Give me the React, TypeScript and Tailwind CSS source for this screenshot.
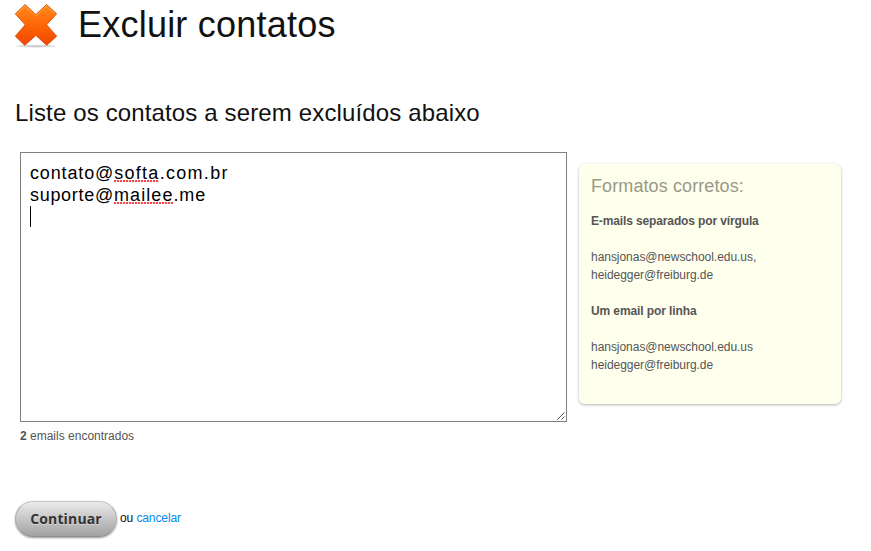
const MISSPELLED =
  "relative after:absolute after:left-0 after:right-px after:top-[17px] after:h-[2px] after:bg-[repeating-linear-gradient(90deg,#f5484c_0px,#f5484c_2px,#ffe4e4_2px,#ffe4e4_3px)] after:content-['']";

function DeleteIcon() {
  return (
    <svg width="46" height="50" viewBox="0 0 46 50" className="block shrink-0" aria-hidden="true">
      <defs>
        <linearGradient id="cross" x1="0" y1="0" x2="0" y2="1">
          <stop offset="0" stopColor="#ff8a1c" />
          <stop offset="0.45" stopColor="#ff6a08" />
          <stop offset="1" stopColor="#f04400" />
        </linearGradient>
        <radialGradient id="floor">
          <stop offset="0" stopColor="#999" stopOpacity="0.6" />
          <stop offset="0.8" stopColor="#aaa" stopOpacity="0.35" />
          <stop offset="1" stopColor="#aaa" stopOpacity="0" />
        </radialGradient>
      </defs>
      <ellipse cx="23" cy="46.2" rx="22" ry="1.6" fill="url(#floor)" />
      <path
        d="M12 4.6 L22.8 14.6 L33.6 4.6 L43.6 13.8 L33.6 24.8 L43.6 36.2 L33.8 45.3 L22.8 35.4 L11.8 45.3 L2.4 36.2 L12.2 24.8 L2.4 13.8 Z"
        fill="url(#cross)"
        stroke="#e05010"
        strokeWidth="1"
        strokeLinejoin="round"
      />
      <path
        d="M3.8 13.8 L12 6 L22.8 16.1 L33.6 6 L42.2 13.8"
        fill="none"
        stroke="#ffb04a"
        strokeWidth="0.9"
      />
    </svg>
  );
}

function FormatsCard() {
  return (
    <aside className="mt-3 h-60 w-[262px] rounded-md bg-[#ffffee] px-3 pt-[13px] text-xs leading-[18px] tracking-[-0.04px] text-[#555] shadow-[0_1px_3px_rgba(0,0,0,0.3)]">
      <h3 className="text-lg leading-[18px] tracking-[0.1px] text-[#999988]">Formatos corretos:</h3>
      <p className="mt-[17px] font-bold tracking-[-0.13px]">E-mails separados por vírgula</p>
      <p className="mt-[18px]">
        hansjonas@newschool.edu.us,
        <br />
        heidegger@freiburg.de
      </p>
      <p className="mt-[18px] font-bold tracking-[-0.1px]">Um email por linha</p>
      <p className="mt-[18px]">
        hansjonas@newschool.edu.us
        <br />
        heidegger@freiburg.de
      </p>
    </aside>
  );
}

export default function App() {
  return (
    <main className="h-[551px] w-[871px] overflow-hidden bg-white font-['Liberation_Sans',Arial,sans-serif] text-[#111]">
      <header className="flex h-[50px] pl-[13px]">
        <DeleteIcon />
        <h1 className="ml-[19px] text-[36px] leading-[50px] tracking-[0.22px] whitespace-nowrap">Excluir contatos</h1>
      </header>
      <h2 className="mt-[47px] pl-[15px] text-2xl leading-8 tracking-[0.14px] whitespace-nowrap">
        Liste os contatos a serem excluídos abaixo
      </h2>
      <section className="mt-[23px] flex gap-3 pl-5">
        <div className="relative h-[270px] w-[547px] border border-[#808080] bg-white px-[9px] py-[9px] text-lg leading-[22px] tracking-[1.3px] text-black">
          <p>
            <span className="tracking-[0.85px]">contato@</span>
            <span className={MISSPELLED}>softa</span>.com.br
          </p>
          <p>
            <span className="tracking-[0.7px]">suporte@</span>
            <span className={`${MISSPELLED} tracking-[1.1px]`}>mailee</span>
            <span className="tracking-[0.8px]">.me</span>
          </p>
          <div className="h-[21px] w-px bg-black" />
          <svg className="absolute right-[1px] bottom-[1px]" width="8" height="8" aria-hidden="true">
            <path d="M0.5 7.5 L7.5 0.5 M4.5 7.5 L7.5 4.5" stroke="#555" strokeWidth="1" fill="none" />
          </svg>
        </div>
        <FormatsCard />
      </section>
      <p className="mt-[5px] pl-5 text-xs leading-[18px] tracking-[0px] text-[#555]">
        <strong>2</strong> emails encontrados
      </p>
      <div className="mt-14 flex items-center pl-[15px] text-xs tracking-[-0.1px]">
        <button className="h-9 w-[102px] rounded-full border border-[#aaa] border-t-[#c4c4c4] border-b-[#909090] bg-linear-to-b from-[#ebebeb] to-[#a2a2a2] font-['Open_Sans','Noto_Sans',sans-serif] text-[14px] font-bold tracking-[0.15px] text-[#333] shadow-[0_1px_2px_rgba(0,0,0,0.4)] [text-shadow:0_1px_0_rgba(255,255,255,0.4)]">
          Continuar
        </button>
        <span className="ml-[3px] pb-[2px]">
          ou <a className="text-[#0088ee]">cancelar</a>
        </span>
      </div>
    </main>
  );
}
